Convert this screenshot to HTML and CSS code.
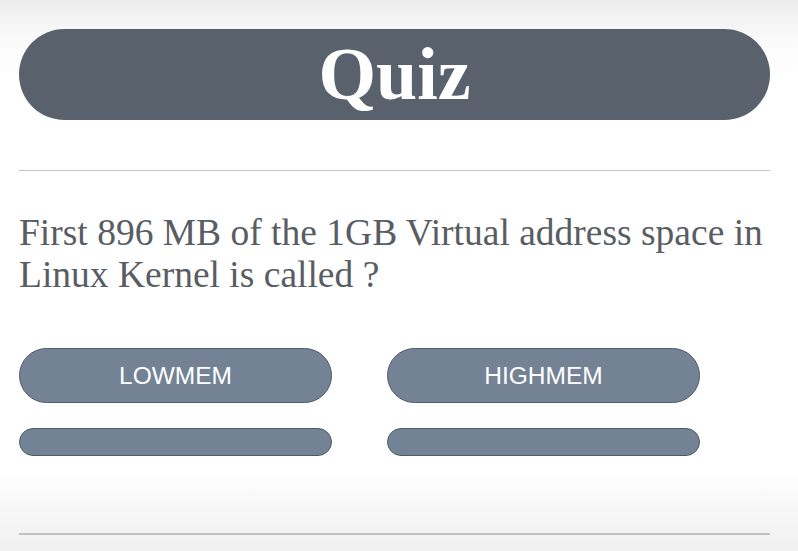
FILE: index.html
```html
<!DOCTYPE html>
<html>
<head>
<meta charset="utf-8">
<link rel="stylesheet" href="styles.css">
</head>
<body>
<div class="page">
  <h1 class="title">Quiz</h1>
  <hr class="rule">
  <p class="question">First 896 MB of the 1GB Virtual address space in Linux Kernel is called ?</p>
  <div class="answers">
    <button class="answer">LOWMEM</button>
    <button class="answer">HIGHMEM</button>
    <button class="answer small"></button>
    <button class="answer small"></button>
  </div>
  <hr class="rule bottom">
</div>
</body>
</html>
```
FILE: styles.css
```css
html, body {
  margin: 0;
  padding: 0;
}
body {
  width: 798px;
  height: 551px;
  overflow: hidden;
  background: linear-gradient(to bottom, #ededed 0px, #fafafa 40px, #ffffff 80px, #ffffff 470px, #f7f7f7 510px, #f0f0f0 551px);
}
.page {
  width: 751px;
  margin-left: 19px;
  padding-top: 29px;
}
.title {
  margin: 0;
  height: 91px;
  border-radius: 46px;
  background: #59626c;
  color: #ffffff;
  font-family: "Liberation Serif", serif;
  font-weight: bold;
  font-size: 74px;
  line-height: 91px;
  text-align: center;
}
.rule {
  margin: 50px 0 0;
  border: 0;
  height: 1px;
  background: #c4c4c4;
}
.question {
  margin: 41px 0 0;
  font-family: "Liberation Serif", serif;
  font-size: 37.5px;
  line-height: 42px;
  color: #585d63;
}
.answers {
  display: grid;
  grid-template-columns: 313px 313px;
  column-gap: 55px;
  row-gap: 25px;
  margin-top: 52px;
}
.answer {
  height: 55px;
  border: 1px solid #4f5a66;
  border-radius: 28px;
  background: #738295;
  color: #ffffff;
  font-family: "Liberation Sans", Arial, sans-serif;
  font-size: 24.5px;
  padding: 0;
}
.answer.small {
  height: 28px;
  border-radius: 14px;
}
.rule.bottom {
  margin-top: 77px;
  height: 2px;
  background: #c2c2c2;
}
```
